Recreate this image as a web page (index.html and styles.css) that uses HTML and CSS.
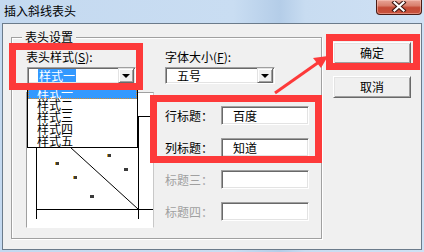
FILE: index.html
```html
<!DOCTYPE html>
<html>
<head>
<meta charset="utf-8">
<link rel="stylesheet" href="styles.css">
</head>
<body>
<div class="window">
  <div class="titlebar">
    <span class="title">插入斜线表头</span>
    <div class="close">
      <svg width="16" height="11" viewBox="0 0 16 11">
        <path d="M3.5 1.5 L12.5 9.5 M12.5 1.5 L3.5 9.5" stroke="#3a1510" stroke-width="4.2" stroke-linecap="square" fill="none"/>
        <path d="M3.5 1.5 L12.5 9.5 M12.5 1.5 L3.5 9.5" stroke="#fff" stroke-width="2.2" stroke-linecap="square" fill="none"/>
      </svg>
    </div>
  </div>
  <div class="client">
    <div class="group">
      <span class="group-title">表头设置</span>
      <div class="col-left">
        <div class="label">表头样式(<u>S</u>):</div>
        <div class="combo-wrap">
          <div class="combo combo-style"><span class="sel">样式一</span><span class="dd"><i></i></span></div>
          <ul class="list">
            <li class="on">样式一</li>
            <li>样式二</li>
            <li>样式三</li>
            <li>样式四</li>
            <li>样式五</li>
          </ul>
        </div>
        <div class="preview">
          <svg width="126" height="134" viewBox="0 0 126 134">
            <g stroke="#000" stroke-width="1" fill="none" shape-rendering="crispEdges">
              <line x1="9" y1="23.5" x2="126" y2="23.5"/>
              <line x1="9" y1="116.5" x2="126" y2="116.5"/>
              <line x1="9.5" y1="23" x2="9.5" y2="126"/>
              <line x1="111.5" y1="23" x2="111.5" y2="126"/>
            </g>
            <line x1="9" y1="23" x2="111" y2="116" stroke="#000" stroke-width="1"/>
            <g fill="#3a3a3a">
              <rect x="28" y="69" width="4" height="3"/>
              <rect x="80" y="61" width="4" height="3"/>
              <rect x="46" y="83" width="4" height="3"/>
              <rect x="97" y="75" width="4" height="3"/>
              <rect x="63" y="102" width="4" height="3"/>
            </g>
            <g fill="#e0a020">
              <rect x="28" y="69" width="1" height="3"/>
              <rect x="80" y="61" width="1" height="3"/>
              <rect x="46" y="83" width="1" height="3"/>
            </g>
          </svg>
        </div>
      </div>
      <div class="col-right">
        <div class="label">字体大小(<u>F</u>):</div>
        <div class="combo combo-size"><span class="val">五号</span><span class="dd"><i></i></span></div>
        <div class="rows">
          <div class="row"><span class="rlabel">行标题：</span><div class="input">百度</div></div>
          <div class="row"><span class="rlabel">列标题：</span><div class="input">知道</div></div>
          <div class="row disabled"><span class="rlabel">标题三：</span><div class="input"></div></div>
          <div class="row disabled"><span class="rlabel">标题四：</span><div class="input"></div></div>
        </div>
      </div>
    </div>
    <div class="buttons">
      <div class="btn">确定</div>
      <div class="btn">取消</div>
    </div>
  </div>
</div>
<svg class="marks" width="424" height="252" viewBox="0 0 424 252">
  <g fill="none" stroke="#fd3a3a" stroke-width="7">
    <rect x="12.5" y="46.5" width="127" height="40"/>
    <rect x="153.5" y="98.5" width="165" height="61"/>
    <rect x="329.5" y="37.5" width="87" height="29"/>
  </g>
  <line x1="275" y1="93" x2="319" y2="62" stroke="#fd3a3a" stroke-width="3"/>
  <polygon points="328,56 321,68 313,58" fill="#fd3a3a"/>
</svg>
</body>
</html>
```

FILE: styles.css
```css
* { box-sizing: border-box; }
html, body { margin: 0; padding: 0; }
body {
  width: 424px;
  height: 252px;
  overflow: hidden;
  position: relative;
  background: #c3d8ee;
  font-family: "Noto Sans CJK SC", "Noto Sans", sans-serif;
  font-size: 12px;
  color: #000;
}
.window {
  width: 424px;
  height: 252px;
  display: flex;
  flex-direction: column;
  background: linear-gradient(to right, #c4d9f0 0, #c9ddf2 55%, #b4cde8 66%, #c8dcf1 72%, #cfe1f4 100%);
}
.titlebar {
  height: 23px;
  flex: none;
  display: flex;
  align-items: flex-start;
  padding-left: 4px;
}
.title {
  font-size: 12px;
  line-height: 14px;
  margin-top: 4px;
  letter-spacing: 0;
}
.close {
  margin-left: auto;
  margin-right: 2px;
  width: 46px;
  height: 15px;
  border: 1px solid #4a1c15;
  border-top: none;
  border-radius: 0 0 4px 4px;
  background: linear-gradient(to bottom, #e8a597 0, #d9806d 40%, #c44a35 55%, #c9533d 100%);
  box-shadow: inset 0 0 0 1px rgba(255, 210, 200, 0.45);
  display: flex;
  align-items: center;
  justify-content: center;
}
.close svg { display: block; margin-top: -1px; }
.client {
  flex: 1;
  margin: 0 2px 2px 2px;
  background: #f0f0f0;
  border: 1px solid #6b7b8b;
  display: flex;
  align-items: flex-start;
}
.group {
  position: relative;
  margin: 13px 0 0 8px;
  width: 311px;
  height: 202px;
  border: 1px solid #a0a0a0;
  box-shadow: inset 1px 1px 0 #fff, 1px 1px 0 #fff;
  display: flex;
  padding: 12px 0 0 14px;
}
.group-title {
  position: absolute;
  top: -8px;
  left: 10px;
  padding: 0 3px;
  background: #f0f0f0;
  line-height: 14px;
}
.col-left {
  width: 128px;
  display: flex;
  flex-direction: column;
}
.col-right {
  margin-left: 11px;
  width: 144px;
  display: flex;
  flex-direction: column;
}
.label {
  height: 14px;
  line-height: 14px;
  white-space: nowrap;
}
.label u { text-decoration: underline; text-underline-offset: 1px; }
.combo-wrap {
  position: relative;
  margin-top: 3px;
}
.combo {
  height: 17px;
  background: #fff;
  border-top: 1px solid #a0a0a0;
  border-left: 1px solid #a0a0a0;
  border-right: 1px solid #fff;
  border-bottom: 1px solid #fff;
  box-shadow: inset 1px 1px 0 #696969, inset -1px -1px 0 #e3e3e3;
  display: flex;
  align-items: center;
  padding: 1px 1px 1px 1px;
}
.combo-style {
  margin-left: 1px;
  width: 109px;
}
.combo-size {
  margin-top: 3px;
  width: 110px;
}
.sel {
  margin-left: 9px;
  background: #3399ff;
  color: #fff;
  line-height: 13px;
  padding: 0 1px;
}
.val {
  margin-left: 10px;
  line-height: 13px;
}
.dd {
  margin-left: auto;
  width: 16px;
  height: 15px;
  background: #f0f0f0;
  border-top: 1px solid #e3e3e3;
  border-left: 1px solid #e3e3e3;
  border-right: 1px solid #696969;
  border-bottom: 1px solid #696969;
  box-shadow: inset 1px 1px 0 #fff, inset -1px -1px 0 #a0a0a0;
  display: flex;
  align-items: center;
  justify-content: center;
}
.dd i {
  display: block;
  width: 0;
  height: 0;
  border-left: 4px solid transparent;
  border-right: 4px solid transparent;
  border-top: 4px solid #000;
}
.list {
  position: absolute;
  z-index: 2;
  top: 19px;
  left: 1px;
  width: 111px;
  margin: 0;
  padding: 0;
  list-style: none;
  background: #fff;
  border: 1px solid #000;
}
.list li {
  height: 12px;
  line-height: 12px;
  padding-left: 9px;
}
.list li.on {
  background: #3399ff;
  color: #fff;
  outline: 1px dotted #e08a20;
  outline-offset: -1px;
}
.preview {
  margin-top: 8px;
  width: 128px;
  height: 136px;
  background: #fff;
  border-top: 1px solid #a0a0a0;
  border-left: 1px solid #a0a0a0;
  border-right: 1px solid #c8c8c8;
  border-bottom: 1px solid #fff;
}
.preview svg { display: block; }
.rows {
  margin-top: 22px;
  display: flex;
  flex-direction: column;
  gap: 13px;
}
.row {
  height: 19px;
  display: flex;
  align-items: center;
}
.rlabel {
  width: 56px;
  line-height: 14px;
  white-space: nowrap;
}
.row.disabled .rlabel { color: #a0a0a0; }
.input {
  width: 88px;
  height: 19px;
  background: #fff;
  border-top: 1px solid #a0a0a0;
  border-left: 1px solid #a0a0a0;
  border-right: 1px solid #fff;
  border-bottom: 1px solid #fff;
  box-shadow: inset 1px 1px 0 #696969, inset -1px -1px 0 #e3e3e3;
  padding-left: 11px;
  line-height: 17px;
}
.buttons {
  margin: 18px 0 0 11px;
  display: flex;
  flex-direction: column;
  gap: 12px;
}
.btn {
  width: 78px;
  height: 22px;
  background: #f0f0f0;
  border-top: 1px solid #fff;
  border-left: 1px solid #fff;
  border-right: 1px solid #696969;
  border-bottom: 1px solid #696969;
  box-shadow: inset 1px 1px 0 #e3e3e3, inset -1px -1px 0 #a0a0a0;
  display: flex;
  align-items: center;
  justify-content: center;
  line-height: 14px;
}
.marks {
  position: absolute;
  left: 0;
  top: 0;
  z-index: 5;
  pointer-events: none;
}
```
